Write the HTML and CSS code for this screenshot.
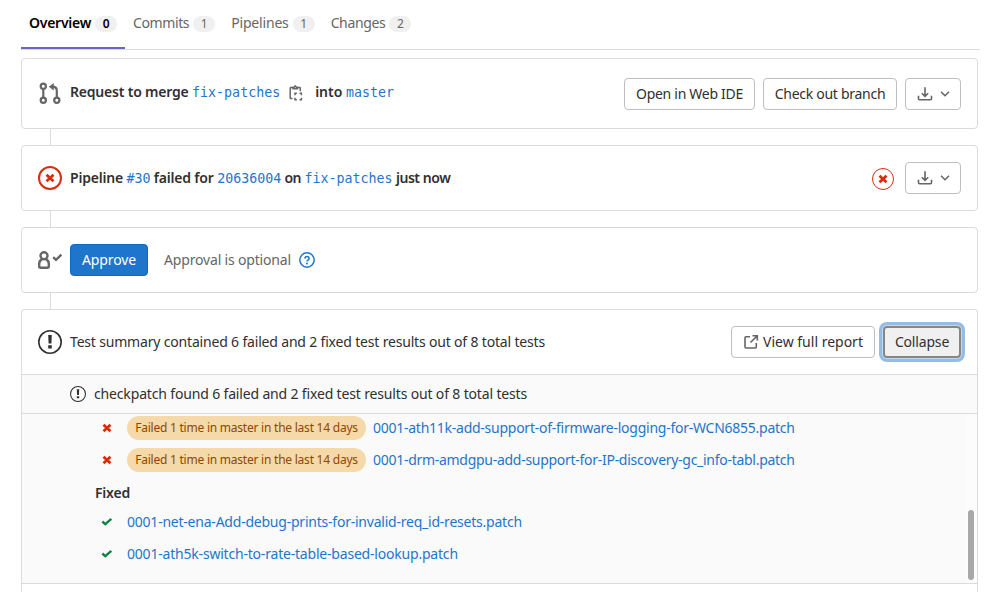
FILE: index.html
```html
<!DOCTYPE html>
<html lang="en">
<head>
<meta charset="utf-8">
<title>Merge request</title>
<link rel="stylesheet" href="styles.css">
</head>
<body>
<svg class="defs" aria-hidden="true">
  <symbol id="i-download" viewBox="0 0 16 16"><path d="M8 1.2v9M4.8 7.2 8 10.3l3.200-3.100M1.500 9.800v3q0 1 1 1h11q1 0 1-1v-3"/></symbol>
  <symbol id="i-chevron" viewBox="0 0 16 16"><path d="m4 5.800 4 3.900 4-3.900"/></symbol>
  <symbol id="i-cross" viewBox="0 0 10 10"><path d="m1.500 1.700 7 6.600M8.500 1.700l-7 6.600"/></symbol>
  <symbol id="i-check" viewBox="0 0 12 10"><path d="m1.300 4.500 3 2.600 6-5.200"/></symbol>
  <symbol id="i-notice" viewBox="0 0 24 24"><circle cx="12" cy="12" r="11.200"/><path class="solid" d="M10.200 5h3.600l-.4 8.500h-2.800zM10.200 15.200h3.600v3.200h-3.600z"/></symbol>
</svg>
<nav class="tabs">
  <a class="tab active"><span class="label w-overview">Overview</span><span class="count">0</span></a>
  <a class="tab"><span class="label w-commits">Commits</span><span class="count">1</span></a>
  <a class="tab"><span class="label w-pipelines">Pipelines</span><span class="count">1</span></a>
  <a class="tab"><span class="label w-changes">Changes</span><span class="count">2</span></a>
</nav>
<main class="widgets">
  <section class="card request">
    <svg class="lead muted" viewBox="0 0 24 24"><g fill="none" stroke="currentColor" stroke-width="2.200"><circle cx="5.300" cy="4.300" r="2.600"/><circle cx="5.300" cy="18.300" r="2.600"/><circle cx="18.800" cy="18.300" r="2.600"/><path d="M5.300 6.900v8.800M18.800 15.700V8.700q0-4-4.500-4"/></g><path fill="currentColor" d="m10.800 4.700 5-3.800v7.600z"/></svg>
    <p class="line bold"><span class="w-request">Request to merge</span><a class="mono">fix-patches</a>
      <svg class="copy" viewBox="0 0 16 16"><path d="M4.500 13.500H2.800q-.6 0-.6-.6V3.200q0-.6.6-.6h1.700M10 2.600h1.700q.6 0 .6.6v3M5 3.800V2.200h1.100L7.200.9l1.200 1.300h1.100v1.600z"/><path d="M7 10.200V8.300h1.900M11.500 8.300h1.900v1.900M13.400 12.800v1.900h-1.900M8.900 14.700H7v-1.900"/></svg>
      <span class="w-into">into</span><a class="mono">master</a></p>
    <div class="actions"><button class="btn b-ide"><span class="w-ide">Open in Web IDE</span></button><button class="btn b-branch"><span class="w-branch">Check out branch</span></button><button class="btn drop"><svg><use href="#i-download"/></svg><svg><use href="#i-chevron"/></svg></button></div>
  </section>
  <section class="card pipeline">
    <span class="lead ring"><svg class="cross"><use href="#i-cross"/></svg></span>
    <p class="line bold"><span class="w-pipe">Pipeline</span><a class="mono">#30</a><span class="w-failed">failed for</span><a class="mono">20636004</a><span class="w-on">on</span><a class="mono">fix-patches</a><span class="w-now">just now</span></p>
    <div class="actions"><span class="ring small"><svg class="cross"><use href="#i-cross"/></svg></span><button class="btn drop"><svg><use href="#i-download"/></svg><svg><use href="#i-chevron"/></svg></button></div>
  </section>
  <section class="card approval">
    <svg class="lead muted" viewBox="0 0 24 24"><g fill="none" stroke="currentColor" stroke-width="2.400"><circle cx="6" cy="7.700" r="3.500"/><path d="M4.200 11.400Q1.200 12.400 1.200 15.700v2.600q0 1.500 1.500 1.500h6.600q1.500 0 1.500-1.500v-2.600q0-3.300-3-4.300"/><path d="m15.200 9.100 2.800 2.700 5.400-5.200"/></g></svg>
    <button class="btn primary"><span class="w-approve">Approve</span></button>
    <span class="optional w-optional">Approval is optional</span>
    <svg class="help" viewBox="0 0 16 16"><g fill="none" stroke="currentColor" stroke-width="1.500"><circle cx="8" cy="8" r="7.200"/><path d="M5.900 6.600q.1-2 2.100-2t2.100 1.800q0 1-1 1.600Q8 8.500 8 9.600"/></g><circle cx="8" cy="11.500" r="1" fill="currentColor"/></svg>
  </section>
  <section class="card tests">
    <header class="summary">
      <svg class="lead notice"><use href="#i-notice"/></svg>
      <p class="line"><span class="w-summary">Test summary contained 6 failed and 2 fixed test results out of 8 total tests</span></p>
      <div class="actions"><button class="btn report"><svg viewBox="0 0 16 16"><path d="M7 2.700H3q-1 0-1 1v9.300q0 1 1 1h9.300q1 0 1-1V9M9.500 1.700h4.800v4.800M14 2 7.500 8.500"/></svg><span class="w-report">View full report</span></button><button class="btn focused"><span class="w-collapse">Collapse</span></button></div>
    </header>
    <div class="suite"><svg class="notice"><use href="#i-notice"/></svg><span class="w-suite">checkpatch found 6 failed and 2 fixed test results out of 8 total tests</span></div>
    <div class="results">
      <div class="list">
        <div class="result"><svg class="cross"><use href="#i-cross"/></svg><span class="badge"><span class="w-badge">Failed 1 time in master in the last 14 days</span></span><a class="w-r1">0001-ath11k-add-support-of-firmware-logging-for-WCN6855.patch</a></div>
        <div class="result"><svg class="cross"><use href="#i-cross"/></svg><span class="badge"><span class="w-badge">Failed 1 time in master in the last 14 days</span></span><a class="w-r2">0001-drm-amdgpu-add-support-for-IP-discovery-gc_info-tabl.patch</a></div>
        <h4><span class="w-fixed">Fixed</span></h4>
        <div class="result"><svg class="check"><use href="#i-check"/></svg><a class="w-r3">0001-net-ena-Add-debug-prints-for-invalid-req_id-resets.patch</a></div>
        <div class="result"><svg class="check"><use href="#i-check"/></svg><a class="w-r4">0001-ath5k-switch-to-rate-table-based-lookup.patch</a></div>
      </div>
      <div class="track"><div class="thumb"></div></div>
    </div>
  </section>
</main>
</body>
</html>
```
FILE: styles.css
```css
* { box-sizing: border-box; }
body { margin: 0; height: 592px; overflow: hidden; background: #fff; color: #303030; font: 14px/20px "Noto Sans", sans-serif; }
.defs { position: absolute; width: 0; height: 0; }
svg { display: block; flex: none; }
p, h4 { margin: 0; }
a { color: #1f75cb; }
[class*="w-"], .mono { white-space: nowrap; }

.tabs { display: flex; width: 959px; height: 50px; margin-left: 21px; border-bottom: 1px solid #dbdbdb; }
.tab { display: flex; height: 49px; padding: 0 8px 2px; align-items: center; color: #666; }
.tab.active { padding-bottom: 0; color: #000; font-weight: 600; border-bottom: 2px solid #6666c4; }
.count { width: 22px; height: 16px; margin-left: 4px; border-radius: 8px; background: #f0f0f0; text-align: center; font-size: 12px; line-height: 16px; }
.label { margin-top: -1px; }

/* Tracking per label */
.w-overview { letter-spacing: -.25px; }
.w-commits { letter-spacing: -.4px; }
.w-pipelines { letter-spacing: -.18px; }
.w-changes { letter-spacing: -.36px; }
.w-request, .w-pipe, .w-failed { letter-spacing: -.2px; }
.w-on { letter-spacing: -.5px; }
.w-now { letter-spacing: -.45px; }
.w-ide { letter-spacing: -.29px; }
.w-branch { letter-spacing: -.28px; }
.w-approve { letter-spacing: -.15px; }
.w-optional, .w-collapse { letter-spacing: -.17px; }
.w-summary { letter-spacing: -.178px; }
.w-suite { letter-spacing: -.158px; }
.w-badge { letter-spacing: -.23px; }
.w-r1 { letter-spacing: -.255px; }
.w-r2 { letter-spacing: -.282px; }
.w-r3 { letter-spacing: -.225px; }
.w-r4 { letter-spacing: -.2px; }
.w-fixed { letter-spacing: -.2px; }

.widgets { width: 957px; margin: 8px 0 0 21px; }
.card { position: relative; display: flex; align-items: center; height: 66px; margin-bottom: 16px; padding: 0 16px; border: 1px solid #dbdbdb; border-radius: 4px; }
.card + .card::before { content: ""; position: absolute; left: 28px; top: -17px; height: 16px; border-left: 1px solid #dbdbdb; }
.request { height: 71px; }
.request .line { margin-bottom: 3px; }
.lead { width: 24px; height: 24px; margin-right: 8px; }
.muted { color: #666; }
.line { display: flex; align-items: center; }
.bold { font-weight: 600; }
.w-request, .w-into, .w-pipe, .w-failed, .w-on { margin-right: 3.5px; }
.w-failed, .w-on, .w-now { margin-left: 3.3px; }
.mono { padding-top: 1px; font: 13.3px/20px "DejaVu Sans Mono", monospace; }
.request .mono { padding-top: 2px; }
.actions { display: flex; align-items: center; gap: 8px; margin-left: auto; }
.btn { display: flex; align-items: center; justify-content: center; height: 32px; padding: 0; border: 1px solid #bfbfbf; border-radius: 4px; background: #fff; color: #303030; font: inherit; }
.b-ide { width: 131px; }
.b-branch { width: 134px; }
.drop { width: 56px; gap: 4px; padding-left: 4px; }
.btn svg { width: 16px; height: 16px; fill: none; stroke: #666; stroke-width: 1.6; }
.primary { width: 78px; background: #1f75cb; border-color: #1068bf; color: #fff; }
.copy { width: 16px; height: 16px; margin: 2px 11px 0 8px; fill: none; stroke: #666; stroke-width: 1.5; }
.ring { display: flex; align-items: center; justify-content: center; border: 1.5px solid #dd2b0e; border-radius: 50%; }
.lead.ring { border-width: 2px; }
.ring.small { width: 22px; height: 22px; margin: 2px 3px 0 0; }
.cross { width: 10px; height: 10px; fill: none; stroke: #dd2b0e; stroke-width: 2.8; }
.optional { margin-left: 16px; color: #666; }
.help { width: 16px; height: 16px; margin-left: 8px; color: #1f75cb; }

.tests { display: block; height: 283px; margin: 0; padding: 0; border-bottom: 0; border-radius: 4px 4px 0 0; }
.summary { display: flex; align-items: center; height: 64px; padding: 0 16px; }
.notice { fill: none; stroke: #303030; stroke-width: 1.6; }
.solid { fill: #303030; stroke: none; }
.report { width: 144px; gap: 4px; }
.focused { width: 78px; border: 0; background: #f0f0f0; box-shadow: inset 0 0 0 2px #868686, 0 0 0 1px rgba(255,255,255,.4), 0 0 0 4px rgba(31,117,203,.48); }
.suite { display: flex; align-items: center; height: 40px; padding-left: 48px; border: solid #dbdbdb; border-width: 1px 0; background: #fafafa; }
.suite .notice { width: 16px; height: 16px; margin-right: 8px; }
.results { display: flex; height: 170px; background: #fafafa; border-bottom: 1px solid #dbdbdb; }
.list { flex: 1; margin-top: -2px; padding-left: 73px; }
.result { display: flex; align-items: center; height: 32px; }
.result svg { margin: 0 15px 0 7px; }
.badge { display: flex; align-items: center; justify-content: center; width: 239px; height: 24px; margin-right: 7px; border-radius: 12px; background: #f5d9a8; color: #8f4700; font-size: 12px; }
h4 { padding: 7px 0 3px; font-size: 14px; font-weight: 600; }
.result .check { width: 12px; height: 10px; margin: 0 14px 0 6px; fill: none; stroke: #108548; stroke-width: 2.4; }
.track { width: 11px; padding: 96px 0 0 2px; background: #fcfcfc; }
.thumb { width: 6px; height: 70px; border-radius: 3px; background: #a8a8a8; }
```
